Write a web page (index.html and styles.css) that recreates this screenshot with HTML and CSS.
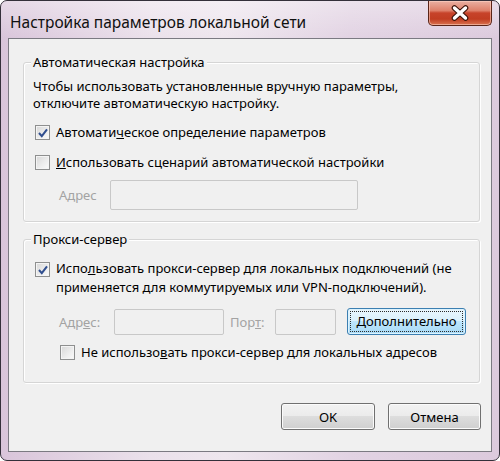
FILE: index.html
```html
<!DOCTYPE html>
<html>

<head>
    <meta charset="utf-8">
    <link rel="stylesheet" href="styles.css">
</head>

<body>

    <div class="window">
        <div class="titlebar">
            <span class="title">Настройка параметров локальной сети</span>
            <button class="close-btn" title="Закрыть">
                <svg width="20" height="16" viewBox="0 0 20 16">
                    <path d="M4.5 3 L15.5 13 M15.5 3 L4.5 13" stroke="#3b1208" stroke-width="5.6" stroke-linecap="round" fill="none" />
                    <path d="M4.5 3 L15.5 13 M15.5 3 L4.5 13" stroke="#ffffff" stroke-width="3.4" stroke-linecap="round" fill="none" />
                </svg>
            </button>
        </div>

        <div class="client">
            <fieldset class="group group-auto">
                <legend>Автоматическая настройка</legend>
                <p class="hint">Чтобы использовать установленные вручную параметры,<br>отключите автоматическую настройку.</p>

                <label class="check first">
                    <span class="box checked"></span>
                    <span>Автомати<u>ч</u>еское определение параметров</span>
                </label>
                <label class="check">
                    <span class="box"></span>
                    <span><u>И</u>спользовать сценарий автоматической настройки</span>
                </label>

                <div class="script-row">
                    <span class="dim label-addr">А<u>д</u>рес</span>
                    <span class="field field-script"></span>
                </div>
            </fieldset>

            <fieldset class="group group-proxy">
                <legend>Прокси-сервер</legend>

                <label class="check multi">
                    <span class="box checked"></span>
                    <span>Испо<u>л</u>ьзовать прокси-сервер для локальных подключений (не<br>применяется для коммутируемых или VPN-подключений).</span>
                </label>

                <div class="proxy-row">
                    <span class="dim label-addr">Адр<u>е</u>с:</span>
                    <span class="field field-addr"></span>
                    <span class="dim label-port">Пор<u>т</u>:</span>
                    <span class="field field-port"></span>
                    <button class="btn btn-focus"><span class="focus-rect"><u>Д</u>ополнительно</span></button>
                </div>

                <label class="check sub">
                    <span class="box"></span>
                    <span>Не использо<u>в</u>ать прокси-сервер для локальных адресов</span>
                </label>
            </fieldset>

            <div class="buttons">
                <button class="btn btn-ok">OK</button>
                <button class="btn btn-cancel">Отмена</button>
            </div>
        </div>
    </div>

</body>

</html>
```

FILE: styles.css
```css
html,
body {
    margin: 0;
    background-color: #ffffff;
}

body {
    font-family: "Noto Sans", "Open Sans", sans-serif;
    font-size: 13px;
    color: #000000;
}

.window {
    width: 500px;
    height: 461px;
    box-sizing: border-box;
    border: 1px solid #34303a;
    border-radius: 7px;
    background: linear-gradient(90deg, #d9c5da 0%, #ebe1eb 30%, #eee6ee 45%, #e2d3e3 70%, #dccadd 100%);
    display: flex;
    flex-direction: column;
    overflow: hidden;
}

.titlebar {
    height: 37px;
    display: flex;
    justify-content: space-between;
    align-items: flex-start;
    padding: 0 7px 0 9px;
    background: linear-gradient(180deg, rgba(255, 255, 255, 0.35) 0%, rgba(255, 255, 255, 0) 100%);
}

.title {
    font-size: 15.5px;
    line-height: 20px;
    margin-top: 11px;
    color: #101010;
}

.close-btn {
    width: 64px;
    height: 25px;
    margin-top: 0;
    border: 1px solid #5a2418;
    border-top: none;
    border-radius: 0 0 5px 5px;
    background: linear-gradient(180deg, #eab0a2 0%, #de806a 40%, #c7432a 50%, #c13d22 75%, #d9724f 100%);
    box-shadow: inset 0 0 0 1px rgba(255, 215, 200, 0.55);
    display: flex;
    align-items: center;
    justify-content: center;
    padding: 0;
}

.client {
    flex: 1;
    margin: 0 7px 8px 7px;
    border: 1px solid #7b7a82;
    background-color: #f0f0f0;
    padding: 0 10px 0 14px;
    display: flex;
    flex-direction: column;
}

/* group boxes */

.group {
    margin: 15px 1px 0 0;
    padding: 8px 9px 11px 9px;
    border: 1px solid #d5d5d5;
    border-radius: 3px;
    box-shadow: inset 1px 1px 0 #ffffff, 1px 1px 0 #ffffff;
    min-width: 0;
}

.group-proxy {
    margin-top: 9px;
    padding-top: 12px;
    padding-bottom: 21px;
}

.group legend {
    padding: 0 2px;
    margin-left: -2px;
    line-height: 16px;
    background-color: #f0f0f0;
}

.hint {
    margin: 0;
    line-height: 17px;
}

/* checkboxes */

.check {
    display: flex;
    align-items: center;
    line-height: 18px;
    margin-top: 12px;
    margin-left: 2px;
}

.check.first {
    margin-top: 11px;
}

.check.multi {
    align-items: flex-start;
    margin-top: 0;
    line-height: 19px;
}

.check.multi .box {
    margin-top: 3px;
}

.check.sub {
    margin-top: 8px;
    margin-left: 27px;
}

.box {
    flex: none;
    width: 13px;
    height: 13px;
    margin-right: 6px;
    border: 1px solid #8e8f8f;
    background: linear-gradient(135deg, #d7d7d7 0%, #ececec 55%, #fbfbfb 100%);
    box-shadow: inset 0 0 0 1px #f4f4f4;
    position: relative;
}

.box.checked::after {
    content: "";
    position: absolute;
    left: 2px;
    top: 2px;
    width: 10px;
    height: 10px;
    background: no-repeat center / 10px 10px url("data:image/svg+xml;utf8,<svg xmlns='http://www.w3.org/2000/svg' width='10' height='10' viewBox='0 0 10 10'><path d='M1 5 L3.8 8.2 L9 1.3' stroke='%23314f8f' stroke-width='2' fill='none'/></svg>");
}

/* address fields */

.dim {
    color: #a3a3a3;
}

.field {
    display: block;
    box-sizing: border-box;
    border: 1px solid #c8c8c8;
    border-radius: 2px;
    background-color: #f0f0f0;
}

.script-row {
    display: flex;
    align-items: center;
    margin-top: 9px;
}

.script-row .label-addr {
    margin-left: 26px;
    width: 51px;
}

.field-script {
    width: 248px;
    height: 30px;
}

.proxy-row {
    display: flex;
    align-items: center;
    margin-top: 11px;
    height: 27px;
}

.proxy-row .label-addr {
    margin-left: 26px;
    width: 55px;
}

.field-addr {
    width: 110px;
    height: 26px;
}

.label-port {
    margin-left: 6px;
    width: 45px;
}

.field-port {
    width: 61px;
    height: 26px;
}

/* push buttons */

.btn {
    font-family: inherit;
    font-size: 13px;
    color: #000000;
    height: 27px;
    box-sizing: border-box;
    border: 1px solid #707070;
    border-radius: 3px;
    background: linear-gradient(180deg, #f2f2f2 0%, #ebebeb 49%, #dddddd 50%, #cfcfcf 100%);
    box-shadow: inset 0 0 0 1px #fbfbfb;
    padding: 0;
}

.btn-focus {
    width: 119px;
    margin-left: 11px;
    border-color: #3c7fb1;
    background: linear-gradient(180deg, #eaf6fd 0%, #d9f0fc 49%, #bee6fd 50%, #a7d9f5 100%);
    box-shadow: inset 0 0 0 1px #dcf2fd;
    padding: 2px;
}

.focus-rect {
    display: block;
    height: 100%;
    box-sizing: border-box;
    border: 1px dotted #2b2b2b;
    line-height: 19px;
}

.buttons {
    display: flex;
    justify-content: flex-end;
    gap: 13px;
    margin-top: 20px;
}

.btn-ok {
    width: 94px;
}

.btn-cancel {
    width: 93px;
}
```
